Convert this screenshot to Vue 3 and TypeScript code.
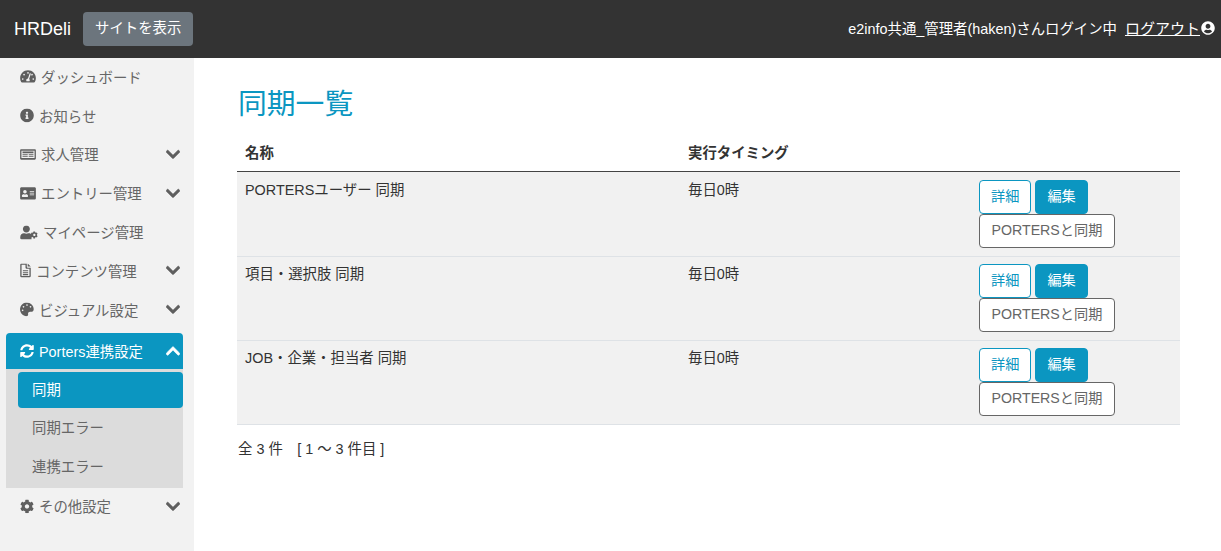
<script setup lang="ts">
type Item = { label: string; icon: string; w: number; chevron?: boolean };
const VB: Record<string, string> = {
  dash: '0 0 576 512', info: '0 0 512 512', news: '0 0 576 512', id: '0 0 576 512', user: '0 0 640 512',
  file: '0 0 384 512', palette: '0 0 512 512', sync: '0 0 512 512', cog: '0 0 512 512',
};
const P: Record<string, string> = {
  dash: 'M288 32C129 32 0 161 0 320c0 53 14 102 39 145 6 9 16 15 27 15h444c11 0 21-6 27-15 25-43 39-92 39-145C576 161 447 32 288 32zm0 64c18 0 32 14 32 32s-14 32-32 32-32-14-32-32 14-32 32-32zM96 384c-18 0-32-14-32-32s14-32 32-32 32 14 32 32-14 32-32 32zm48-160c-18 0-32-14-32-32s14-32 32-32 32 14 32 32-14 32-32 32zm246-56-61 185c14 11 23 28 23 47 0 12-4 23-10 32H234c-6-9-10-20-10-32 0-35 28-64 63-64l61-185c3-11 15-17 26-14s19 16 16 31zm14 24c4-11 14-30 30-30 18 0 32 14 32 32s-14 32-32 32c-10 0-20-5-26-13l-4-21zm76 192c-18 0-32-14-32-32s14-32 32-32 32 14 32 32-14 32-32 32z',
  info: 'M256 8C119.043 8 8 119.083 8 256c0 136.997 111.043 248 248 248s248-111.003 248-248C504 119.083 392.957 8 256 8zm0 110c23.196 0 42 18.804 42 42s-18.804 42-42 42-42-18.804-42-42 18.804-42 42-42zm56 254c0 6.627-5.373 12-12 12h-88c-6.627 0-12-5.373-12-12v-24c0-6.627 5.373-12 12-12h12v-64h-12c-6.627 0-12-5.373-12-12v-24c0-6.627 5.373-12 12-12h64c6.627 0 12 5.373 12 12v100h12c6.627 0 12 5.373 12 12v24z',
  news: 'M40 64h496c22 0 40 18 40 40v304c0 22-18 40-40 40H40c-22 0-40-18-40-40V104c0-22 18-40 40-40zm8 56v272h480V120H48zm40 32h400v64H88v-64zm0 96h190v40H88v-40zm0 72h190v32H88v-32zm226-72h174v40H314v-40zm0 72h174v32H314v-32z',
  id: 'M528 32H48C21.5 32 0 53.5 0 80v352c0 26.5 21.5 48 48 48h480c26.5 0 48-21.5 48-48V80c0-26.5-21.5-48-48-48zM176 128c35.3 0 64 28.7 64 64s-28.7 64-64 64-64-28.7-64-64 28.7-64 64-64zm112 237c0 10.6-10 19-22.400 19H86.400C74 384 64 375.600 64 365v-19c0-32 30-58 67-58h5c12 5 26 8 40 8s28-3 40-8h5c37 0 67 26 67 58v19zm224-45c0 4.400-3.600 8-8 8H360c-4.400 0-8-3.600-8-8v-16c0-4.400 3.600-8 8-8h144c4.400 0 8 3.600 8 8v16zm0-64c0 4.400-3.600 8-8 8H360c-4.400 0-8-3.600-8-8v-16c0-4.400 3.600-8 8-8h144c4.400 0 8 3.600 8 8v16zm0-64c0 4.400-3.600 8-8 8H360c-4.400 0-8-3.600-8-8v-16c0-4.400 3.600-8 8-8h144c4.400 0 8 3.600 8 8v16z',
  user: 'M224 256c70.700 0 128-57.300 128-128S294.700 0 224 0 96 57.300 96 128s57.300 128 128 128zm89.600 32h-16.700c-22.200 10.200-46.900 16-72.900 16s-50.600-5.800-72.900-16h-16.700C60.200 288 0 348.200 0 422.400V464c0 26.500 21.500 48 48 48h352c8 0 15-2 22-5-8-10-12-22-12-35v-70c-12-20-4-46 14-60-26-30-62-54-110-54zM610 370c3-14 3-28 0-42l26-15-32-55-26 15c-11-9-23-16-36-21v-30h-64v30c-13 5-25 12-36 21l-26-15-32 55 26 15c-3 14-3 28 0 42l-26 15 32 55 26-15c11 9 23 16 36 21v30h64v-30c13-5 25-12 36-21l26 15 32-55-26-15zm-94 21c-23 0-42-19-42-42s19-42 42-42 42 19 42 42-19 42-42 42z',
  file: 'M48 0h192v112c0 26 22 48 48 48h96v304c0 26-22 48-48 48H48c-26 0-48-22-48-48V48C0 22 22 0 48 0zm0 48v416h288V200H240c-26 0-48-22-48-48V48H48zm48 200h192v40H96v-40zm0 72h192v40H96v-40zm0 72h192v40H96v-40zM272 0l112 112H272V0z',
  palette: 'M204 6C104 26 24 106 6 204c-32 171 116 308 232 298 44-4 66-42 58-78-10-44 24-86 70-86h72c28 0 48-22 56-50 42-146-110-312-290-282zM96 320c-18 0-32-14-32-32s14-32 32-32 32 14 32 32-14 32-32 32zm32-128c-18 0-32-14-32-32s14-32 32-32 32 14 32 32-14 32-32 32zm128-64c-18 0-32-14-32-32s14-32 32-32 32 14 32 32-14 32-32 32zm128 64c-18 0-32-14-32-32s14-32 32-32 32 14 32 32-14 32-32 32z',
  sync: 'M370.72 133.28C339.458 104.008 298.888 87.962 255.848 88c-77.458.068-144.328 53.178-162.791 126.85-1.344 5.363-6.122 9.15-11.651 9.15H24.103c-7.498 0-13.194-6.807-11.807-14.176C33.933 94.924 134.813 8 256 8c66.448 0 126.791 26.136 171.315 68.685L463.03 40.97C478.149 25.851 504 36.559 504 57.941V192c0 13.255-10.745 24-24 24H345.941c-21.382 0-32.09-25.851-16.971-40.971l41.75-41.749zM32 296h134.059c21.382 0 32.09 25.851 16.971 40.971l-41.75 41.75c31.262 29.273 71.835 45.319 114.876 45.28 77.418-.07 144.315-53.144 162.787-126.849 1.344-5.363 6.122-9.15 11.651-9.15h57.304c7.498 0 13.194 6.807 11.807 14.176C478.067 417.076 377.187 504 256 504c-66.448 0-126.791-26.136-171.315-68.685L48.97 471.03C33.851 486.149 8 475.441 8 454.059V320c0-13.255 10.745-24 24-24z',
  cog: 'M487.4 315.7l-42.6-24.6c4.3-23.2 4.3-47 0-70.2l42.6-24.6c4.9-2.8 7.1-8.6 5.5-14-11.1-35.6-30-67.8-54.7-94.6-3.8-4.1-10-5.1-14.8-2.3L380.8 110c-17.9-15.4-38.5-27.3-60.8-35.1V25.8c0-5.6-3.9-10.5-9.4-11.7-36.7-8.2-74.3-7.8-109.2 0-5.5 1.2-9.4 6.1-9.4 11.7V75c-22.2 7.9-42.8 19.8-60.8 35.1L88.7 85.5c-4.9-2.8-11-1.9-14.8 2.3-24.7 26.7-43.6 58.9-54.7 94.6-1.7 5.4.6 11.2 5.5 14L67.3 221c-4.3 23.2-4.3 47 0 70.2l-42.6 24.6c-4.9 2.8-7.1 8.6-5.5 14 11.1 35.6 30 67.8 54.7 94.6 3.8 4.1 10 5.1 14.8 2.3l42.6-24.6c17.9 15.4 38.5 27.3 60.8 35.1v49.2c0 5.6 3.9 10.5 9.4 11.7 36.7 8.2 74.3 7.8 109.2 0 5.5-1.2 9.4-6.1 9.4-11.7v-49.2c22.2-7.9 42.8-19.8 60.8-35.1l42.6 24.6c4.9 2.8 11 1.9 14.8-2.3 24.7-26.7 43.6-58.9 54.7-94.6 1.5-5.500-.7-11.300-5.600-14.100zM256 336c-44.100 0-80-35.900-80-80s35.900-80 80-80 80 35.900 80 80-35.900 80-80 80z',
};
const chevDown = 'M207.029 381.476L12.686 187.132c-9.373-9.373-9.373-24.569 0-33.941l22.667-22.667c9.357-9.357 24.522-9.375 33.901-.04L224 284.505l154.745-154.021c9.379-9.335 24.544-9.317 33.901.04l22.667 22.667c9.373 9.373 9.373 24.569 0 33.941L240.971 381.476c-9.373 9.372-24.569 9.372-33.942 0z';
const chevUp = 'M240.971 130.524l194.343 194.343c9.373 9.373 9.373 24.569 0 33.941l-22.667 22.667c-9.357 9.357-24.522 9.375-33.901.04L224 227.495 69.255 381.516c-9.379 9.335-24.544 9.317-33.901-.04l-22.667-22.667c-9.373-9.373-9.373-24.569 0-33.941L207.03 130.525c9.372-9.373 24.568-9.373 33.941-.001z';
const userCircle = 'M248 8C111 8 0 119 0 256s111 248 248 248 248-111 248-248S385 8 248 8zm0 96c48.6 0 88 39.4 88 88s-39.4 88-88 88-88-39.4-88-88 39.4-88 88-88zm0 344c-58.7 0-111.3-26.6-146.5-68.2 18.8-35.4 55.6-59.8 98.5-59.8 2.4 0 4.8.4 7.1 1.1 13 4.2 26.6 6.9 40.9 6.9 14.3 0 28-2.7 40.9-6.9 2.3-.7 4.7-1.1 7.1-1.1 42.9 0 79.7 24.4 98.5 59.8C359.3 421.4 306.7 448 248 448z';

const before: Item[] = [
  { label: 'ダッシュボード', icon: 'dash', w: 16 },
  { label: 'お知らせ', icon: 'info', w: 14 },
  { label: '求人管理', icon: 'news', w: 16, chevron: true },
  { label: 'エントリー管理', icon: 'id', w: 16, chevron: true },
  { label: 'マイページ管理', icon: 'user', w: 18 },
  { label: 'コンテンツ管理', icon: 'file', w: 11, chevron: true },
  { label: 'ビジュアル設定', icon: 'palette', w: 14, chevron: true },
];
const rows = ['PORTERSユーザー 同期', '項目・選択肢 同期', 'JOB・企業・担当者 同期'];
</script>

<template>
  <div class="page">
    <header class="top">
      <div class="brand">
        <span class="logo">HRDeli</span>
        <a class="site-btn">サイトを表示</a>
      </div>
      <div class="login">
        <span>e2info共通_管理者(haken)さんログイン中</span>
        <a class="logout"><u>ログアウト</u><svg viewBox="0 0 496 512" class="uc"><path :d="userCircle" /></svg></a>
      </div>
    </header>
    <div class="body">
      <nav class="side">
        <a v-for="it in before" :key="it.label" class="item">
          <span class="lbl">
            <svg :viewBox="VB[it.icon]" :width="it.w" height="14" class="ic"><path :d="P[it.icon]" /></svg>{{ it.label }}
          </span>
          <svg v-if="it.chevron" viewBox="0 0 448 512" class="chev"><path :d="chevDown" /></svg>
        </a>
        <div class="group">
          <a class="item open">
            <span class="lbl">
              <svg :viewBox="VB.sync" width="14" height="14" class="ic"><path :d="P.sync" /></svg>Porters連携設定
            </span>
            <svg viewBox="0 0 448 512" class="chev"><path :d="chevUp" /></svg>
          </a>
          <div class="sub">
            <a class="sub-item cur">同期</a>
            <a class="sub-item">同期エラー</a>
            <a class="sub-item">連携エラー</a>
          </div>
        </div>
        <a class="item">
          <span class="lbl">
            <svg :viewBox="VB.cog" width="14" height="14" class="ic"><path :d="P.cog" /></svg>その他設定
          </span>
          <svg viewBox="0 0 448 512" class="chev"><path :d="chevDown" /></svg>
        </a>
      </nav>
      <main class="main">
        <h1>同期一覧</h1>
        <table>
          <thead>
            <tr><th class="c1">名称</th><th class="c2">実行タイミング</th><th></th></tr>
          </thead>
          <tbody>
            <tr v-for="r in rows" :key="r">
              <td>{{ r }}</td>
              <td>毎日0時</td>
              <td>
                <div class="btns">
                  <a class="btn outline">詳細</a><a class="btn solid">編集</a>
                  <a class="btn grey">PORTERSと同期</a>
                </div>
              </td>
            </tr>
          </tbody>
        </table>
        <p class="count">全 3 件　[ 1 ～ 3 件目 ]</p>
      </main>
    </div>
  </div>
</template>

<style>
html, body { margin: 0; background: #fff; }
</style>

<style scoped>
.page {
  height: 551px;
  overflow: hidden;
  display: flex;
  flex-direction: column;
  font-family: "Liberation Sans", "Noto Sans CJK JP", sans-serif;
  font-size: 14.4px;
  color: #333;
}
.top {
  height: 58px;
  flex: none;
  background: #333;
  color: #fff;
  display: flex;
  align-items: center;
  justify-content: space-between;
  padding: 0 6px 0 14px;
}
.brand { display: flex; align-items: center; gap: 12px; }
.logo { font-size: 18px; }
.site-btn {
  background: #6c757d;
  border-radius: 4px;
  height: 34px;
  line-height: 33px;
  padding: 0 12px;
  font-size: 14.4px;
}
.login { display: flex; align-items: center; gap: 8px; font-size: 14.4px; padding-bottom: 3px; }
.logout { display: flex; align-items: center; font-size: 15px; }
.uc { width: 14px; height: 14px; fill: #fff; margin-left: 1px; }
.body { flex: 1; display: flex; min-height: 0; }
.side {
  flex: none;
  background: #f2f2f2;
  padding: 0 11px 0 6px;
  width: 177px;
  color: #666;
  font-size: 14.4px;
}
.item {
  display: flex;
  align-items: center;
  justify-content: space-between;
  height: 38.8px;
  padding: 0 3px 0 14px;
  margin-top: 0;
  transform: translateY(-0.6px);
}
.lbl { display: flex; align-items: center; }
.ic { fill: #5f5f5f; margin-right: 5px; flex: none; }
.chev { width: 14px; height: 16px; fill: #5f5f5f; stroke: #5f5f5f; stroke-width: 22px; }
.group { margin-top: 3px; }
.item.open {
  transform: none;
  background: #0b96c1;
  color: #fff;
  height: 36px;
  border-radius: 4px 4px 0 0;
}
.open .ic { fill: #fff; }
.open .chev { fill: #fff; stroke: #fff; }
.sub { background: #dcdcdc; padding: 3px 0 0 12px; height: 116px; }
.sub-item {
  display: flex;
  align-items: center;
  height: 38.800px;
  padding: 0 0 2px 14px;
  box-sizing: border-box;
}
.sub-item.cur {
  background: #0b96c1;
  color: #fff;
  height: 36px;
  border-radius: 4px;
  margin-bottom: 1px;
}
.main { flex: 1; min-width: 0; padding: 25px 41px 0 43px; }
h1 {
  margin: 0 0 9px 1px;
  font-size: 28.8px;
  font-weight: 400;
  line-height: 43px;
  color: #0b96c1;
}
table { width: 943px; border-collapse: collapse; table-layout: fixed; }
th {
  text-align: left;
  font-size: 14.4px;
  font-weight: 700;
  height: 33px;
  padding: 0 8px 3px;
  border-bottom: 1px solid #444;
}
.c1 { width: 427px; }
.c2 { width: 275px; }
td {
  background: #f1f1f1;
  padding: 7px 8px 8px;
  vertical-align: top;
  border-bottom: 1px solid #dee2e6;
  font-size: 14.4px;
  line-height: 20px;
  height: 68px;
}
tbody tr:first-child td { padding-top: 8px; }
.btns { display: flex; flex-wrap: wrap; gap: 0 4px; align-items: flex-start; }
.btn {
  box-sizing: border-box;
  height: 34px;
  line-height: 30px;
  border-radius: 4px;
  border: 1px solid;
  padding: 0 11px;
  font-size: 14.2px;
  text-align: center;
}
.outline { color: #0b96c1; border-color: #0b96c1; background: #fff; }
.solid { color: #fff; border-color: #0b96c1; background: #0b96c1; }
.grey { color: #666; border-color: #666; background: #fff; flex: none; padding: 0 11.5px; }
.count { margin: 14px 0 0 1px; font-size: 14.4px; line-height: 20px; }
</style>
